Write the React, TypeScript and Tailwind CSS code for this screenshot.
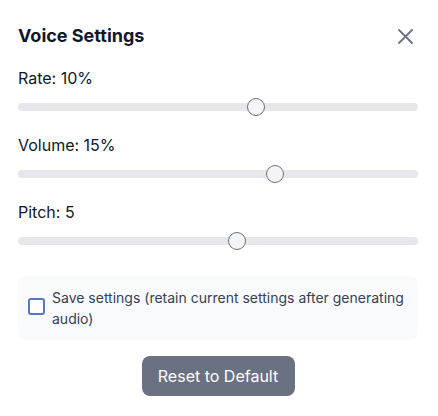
import { useState } from "react";

const font = { fontFamily: "Inter, 'Noto Sans', sans-serif" };

type SliderProps = { label: string; value: number; min: number; max: number };

const Slider = ({ label, value, min, max }: SliderProps) => {
	const pct = (value - min) / (max - min);
	return (
		<div className="flex flex-col">
			<p className="text-[16px] leading-6 text-gray-900">{label}</p>
			<div className="relative mt-[13px] h-2 w-full rounded-full bg-gray-200">
				<div
					className="absolute top-1/2 h-[18px] w-[18px] -translate-y-1/2 rounded-full border border-gray-500 bg-gray-100"
					style={{ left: `calc(${pct} * (100% - 18px))` }}
				/>
			</div>
		</div>
	);
};

export default function App() {
	const [save, setSave] = useState(false);

	return (
		<div className="h-[416px] w-[438px] bg-white pl-[18px] pr-[20px] pt-[24px]" style={font}>
			{/* Header */}
			<div className="flex items-center justify-between">
				<h2 className="text-[18px] font-bold leading-6 text-gray-900">Voice Settings</h2>
				<button className="mr-[5px] text-gray-500">
					<svg width="15" height="15" viewBox="0 0 15 15" fill="none" stroke="currentColor" strokeWidth="1.8" strokeLinecap="round">
						<path d="M1 1 L14 14 M14 1 L1 14" />
					</svg>
				</button>
			</div>

			<div className="mt-[18px] flex flex-col gap-[22px]">
				<Slider label="Rate: 10%" value={10} min={-50} max={50} />
				<Slider label="Volume: 15%" value={15} min={-50} max={50} />
				<Slider label="Pitch: 5" value={5} min={-50} max={50} />
			</div>

			{/* Save option */}
			<label className="mt-[31px] flex h-[64px] cursor-pointer items-start gap-[7px] rounded-lg bg-gray-50 pl-[10px] pr-2 pt-[11px]">
				<span
					onClick={() => setSave(!save)}
					className="mt-[11px] h-[17px] w-[17px] shrink-0 rounded-[3px] border-2 border-[#5577c4] bg-white"
				/>
				<span className="text-[14px] leading-[21px] text-gray-700">
					Save settings (retain current settings after generating audio)
				</span>
			</label>

			<div className="mt-[16px] flex justify-center">
				<button className="h-[40px] w-[153px] rounded-lg bg-gray-500 text-[16px] text-white">
					Reset to Default
				</button>
			</div>
		</div>
	);
}
